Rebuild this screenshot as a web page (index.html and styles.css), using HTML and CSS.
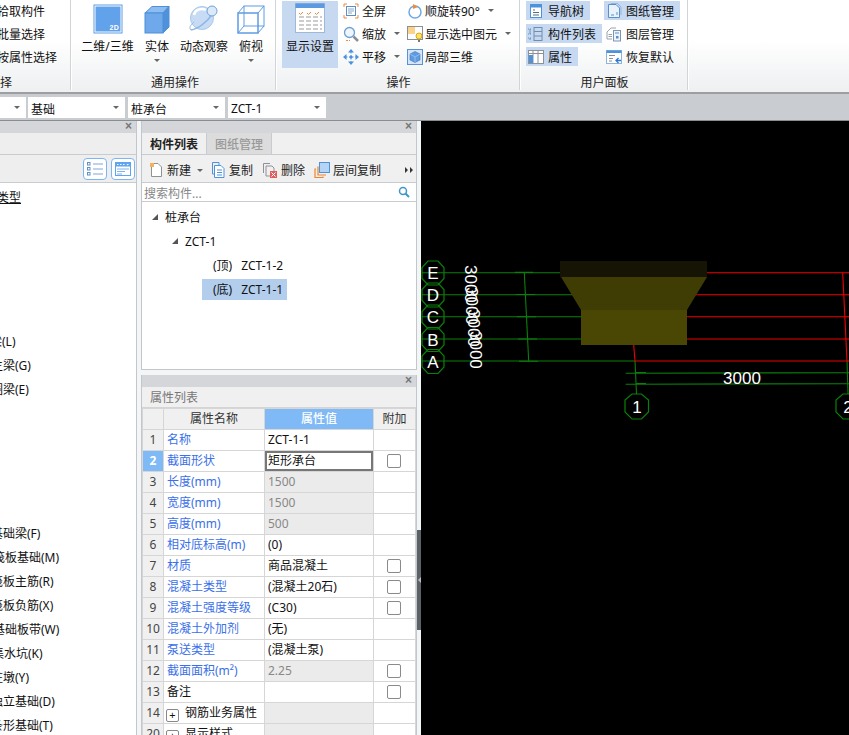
FILE: index.html
```html
<!DOCTYPE html>
<html lang="zh">
<head>
<meta charset="utf-8">
<title>构件列表</title>
<link rel="stylesheet" href="styles.css">
</head>
<body>
<header class="ribbon">
  <section class="group g1">
    <div class="g-body rows clip">
      <div class="row">拾取构件</div>
      <div class="row">批量选择</div>
      <div class="row">按属性选择</div>
    </div>
    <div class="g-label clip-label">选择</div>
  </section>
  <section class="group g2">
    <div class="g-body bigs">
      <div class="big w53">
        <svg class="ic30" viewBox="0 0 30 30"><rect x="1" y="1" width="28" height="28" fill="#fff" stroke="#5c9ce4"/><rect x="2.500" y="2.500" width="25" height="25" fill="#62a2ea"/><text x="26" y="26" class="t2d">2D</text></svg>
        <span class="big-t">二维/三维</span>
      </div>
      <div class="big w24">
        <svg class="ic30" viewBox="0 0 30 30"><path d="M3 9 10 2.500H27L21 9Z" fill="#8dbdf0" stroke="#4f8fd6"/><path d="M21 9 27 2.500V23L21 29Z" fill="#5091dc" stroke="#4f8fd6"/><rect x="3" y="9" width="18" height="20" fill="#6fa9ec" stroke="#4f8fd6"/></svg>
        <span class="big-t">实体</span>
        <i class="tri"></i>
      </div>
      <div class="big w48">
        <svg class="ic30" viewBox="0 0 30 30"><circle cx="13" cy="14" r="11.500" fill="#c7dcf4" stroke="#a9c8ea"/><path d="M5 11a8 7 0 0 1 12-5" fill="none" stroke="#fff" stroke-width="2.500"/><path d="M2 26C8 25 18 19 24 9" fill="none" stroke="#8fb7e6" stroke-width="1.500"/><circle cx="23" cy="7" r="5" fill="#dbe9f8" stroke="#6fa2dc"/><path d="M2 26c-3-3 1-6 3-8" fill="none" stroke="#8fb7e6"/></svg>
        <span class="big-t">动态观察</span>
      </div>
      <div class="big w24">
        <svg class="ic30" viewBox="0 0 30 30"><g fill="none" stroke="#5c9ce4"><rect x="2" y="9" width="20" height="20" stroke-width="1.500"/><rect x="8" y="2" width="20" height="20"/><path d="M2 9 8 2M22 9 28 2M22 29 28 22M2 29 8 22"/></g></svg>
        <span class="big-t">俯视</span>
        <i class="tri"></i>
      </div>
    </div>
    <div class="g-label">通用操作</div>
  </section>
  <section class="group g3">
    <div class="g-body cols3">
      <div class="big disp on">
        <svg class="ic30" viewBox="0 0 30 30"><rect x="0.500" y="0.500" width="29" height="29" fill="#fff" stroke="#9db8d8"/><rect x="0.500" y="0.500" width="29" height="4.500" fill="#5b9ae0"/><g stroke="#f08a30"><path d="M4 10l1.500 1.500L8 9M12 10l1.500 1.500L16 9M20 10l1.500 1.500L24 9" fill="none"/></g><g stroke="#9a9a9a" stroke-dasharray="5 2"><path d="M4 14H27M4 18H27M4 22H27M4 26H27"/></g></svg>
        <span class="disp-t">显示设置</span>
      </div>
      <div class="rows col-a">
        <div class="row"><svg class="ic16" viewBox="0 0 16 16"><path d="M1 4V1H4M12 1H15V4M15 12V15H12M4 15H1V12" fill="none" stroke="#ef8a3a"/><rect x="3.500" y="3.500" width="9" height="9" fill="#fff" stroke="#5b8fc9"/><path d="M5 6H11M5 8H11M5 10H9" stroke="#8aa5c4"/></svg><span>全屏</span></div>
        <div class="row"><svg class="ic16" viewBox="0 0 16 16"><circle cx="6.500" cy="6.500" r="5" fill="#eef5fc" stroke="#6f9fd2" stroke-width="1.300"/><path d="M10.500 10.500 15 15" stroke="#8b8f94" stroke-width="2.500"/><path d="M3 14.500H7" stroke="#ef8a3a" stroke-dasharray="2 1"/></svg><span>缩放</span><i class="tri"></i></div>
        <div class="row"><svg class="ic16" viewBox="0 0 16 16"><g fill="#4c93dc"><path d="M8 0 11 3.500H5ZM8 16 5 12.500H11ZM0 8 3.500 5V11ZM16 8 12.500 11V5Z"/><circle cx="8" cy="8" r="1.500"/></g><path d="M8 3V13M3 8H13" stroke="#4c93dc" stroke-dasharray="1.500 1.500"/></svg><span>平移</span><i class="tri"></i></div>
      </div>
      <div class="rows col-b">
        <div class="row"><svg class="ic16" viewBox="0 0 16 16"><circle cx="8" cy="9" r="6" fill="none" stroke="#6fa8e6" stroke-width="1.500"/><path d="M6 1 11 4 6 6Z" fill="#ef8a3a"/></svg><span>顺旋转90°</span><i class="tri"></i></div>
        <div class="row"><svg class="ic16" viewBox="0 0 16 16"><rect x="0.500" y="0.500" width="15" height="13" fill="#fff" stroke="#8b9097"/><rect x="1" y="1" width="7" height="7" fill="#fbd28a"/><circle cx="12" cy="10" r="3" fill="#fbe45a" stroke="#d9a520"/><path d="M11 14H13V16H11Z" fill="#777"/></svg><span>显示选中图元</span><i class="tri"></i></div>
        <div class="row"><svg class="ic16" viewBox="0 0 16 16"><rect x="0.500" y="0.500" width="15" height="15" fill="#d7e6f7" stroke="#5b93d2"/><path d="M8 2.500 13 5V11L8 13.500 3 11V5Z" fill="#5f9be0" stroke="#3f78bc" stroke-width="0.600"/><path d="M8 8V13M3 5 8 8 13 5" stroke="#a9cbef" stroke-width="0.700" fill="none"/></svg><span>局部三维</span></div>
      </div>
    </div>
    <div class="g-label">操作</div>
  </section>
  <section class="group g4">
    <div class="g-body cols4">
      <div class="rows col-a2">
        <div class="row on"><svg class="ic16" viewBox="0 0 16 16"><rect x="2.500" y="1.500" width="11" height="13" fill="#fff" stroke="#4c93dc"/><rect x="2.500" y="1.500" width="11" height="3" fill="#4c93dc"/><path d="M5 7H7M5 9.500H11M5 12H11" stroke="#5a6a7a"/></svg><span>导航树</span></div>
        <div class="row on"><svg class="ic16" viewBox="0 0 16 16"><g fill="none" stroke="#6f8fb0"><path d="M2 3V8M2 12V14"/><rect x="6" y="1.500" width="8" height="13"/><path d="M6 5.500H14M6 10H14"/></g><path d="M0 3H4M0 8H4M0 12H4" stroke="#4c93dc" stroke-dasharray="1 1"/></svg><span>构件列表</span></div>
        <div class="row on"><svg class="ic16" viewBox="0 0 16 16"><rect x="0.500" y="1.500" width="15" height="13" fill="#fff" stroke="#8d9298"/><path d="M5 2V14M10 2V14M1 4.500H15" stroke="#8d9298"/><rect x="1" y="6" width="4" height="8" fill="#4c93dc"/></svg><span>属性</span></div>
      </div>
      <div class="rows col-b2">
        <div class="row on"><svg class="ic16" viewBox="0 0 16 16"><path d="M2.500 1.500H10L13.500 5V14.500H2.500Z" fill="#e9f2fb" stroke="#5b8fc9"/><path d="M5 1V0.500H11.500L15 4V12" fill="none" stroke="#8fb5dd"/><path d="M5 12H8M11 9V12" stroke="#5b8fc9"/></svg><span>图纸管理</span></div>
        <div class="row"><svg class="ic16" viewBox="0 0 16 16"><rect x="7.500" y="4.500" width="7" height="10.500" fill="#eef4fb" stroke="#7d95b0"/><path d="M9 7H13" stroke="#5b8fc9"/><rect x="10" y="10" width="2.500" height="2.500" fill="#5b8fc9"/><path d="M1 6 5 2H10M1 6V13H6M2.500 8.500H6M2.500 10.500H6" fill="none" stroke="#9aa3ad"/></svg><span>图层管理</span></div>
        <div class="row"><svg class="ic16" viewBox="0 0 16 16"><rect x="0.500" y="1.500" width="15" height="13" fill="#fff" stroke="#8db4dd"/><rect x="0.500" y="1.500" width="15" height="2.500" fill="#4c93dc"/><path d="M3 6.500H9M3 9.500H7M3 12H6" stroke="#8b8f94"/><path d="M15 11.500H10.500M12.500 9 10 11.500 12.500 14" fill="none" stroke="#2f7ad0" stroke-width="1.300"/></svg><span>恢复默认</span></div>
      </div>
    </div>
    <div class="g-label">用户面板</div>
  </section>
  <div class="ribbon-rest"></div>
</header>

<nav class="selects">
  <div class="sel s0"><i class="tri"></i></div>
  <div class="sel s1"><span>基础</span><i class="tri"></i></div>
  <div class="sel s1"><span>桩承台</span><i class="tri"></i></div>
  <div class="sel s1 s3"><span>ZCT-1</span><i class="tri"></i></div>
</nav>

<main class="work">
  <aside class="left">
    <div class="p-head"><span class="x">×</span></div>
    <div class="left-tabs"></div>
    <div class="left-tools">
      <span class="ibtn"><svg width="18" height="16" viewBox="0 0 18 16"><g fill="none" stroke="#5f90c6"><rect x="1.500" y="1.500" width="2.500" height="2.500"/><rect x="1.500" y="6.500" width="2.500" height="2.500"/><rect x="1.500" y="11.500" width="2.500" height="2.500"/><path d="M7 3H17M7 8H17M7 13H17" stroke="#7fa8d6"/></g></svg></span>
      <span class="ibtn"><svg width="16" height="14" viewBox="0 0 16 14"><rect x="0.500" y="0.500" width="15" height="13" fill="#fff" stroke="#5ea4f0"/><rect x="0.500" y="0.500" width="15" height="4" fill="#5ea4f0"/><path d="M2 2.500H3.500M5 2.500H6.500M8 2.500H9.500" stroke="#fff"/><path d="M11.500 2H14L12.700 3.500Z" fill="#fff"/><path d="M2 7H14M2 9.500H10M2 12H7" stroke="#7fb4ee"/></svg></span>
    </div>
    <ul class="l-list">
      <li class="u">基础类型</li>
      <li class="a1">连梁(L)</li>
      <li class="a2">框架主梁(G)</li>
      <li class="a3">圈梁(E)</li>
      <li class="b1">基础梁(F)</li>
      <li class="b2">筏板基础(M)</li>
      <li class="b2r">筏板主筋(R)</li>
      <li class="b2r">筏板负筋(X)</li>
      <li class="b2">基础板带(W)</li>
      <li class="b3">集水坑(K)</li>
      <li class="b4">柱墩(Y)</li>
      <li class="b5">独立基础(D)</li>
      <li class="b5">条形基础(T)</li>
    </ul>
  </aside>

  <div class="mid">
    <section class="list-panel">
      <div class="p-head"><span class="x">×</span></div>
      <div class="tabs"><span class="tab act">构件列表</span><span class="tab">图纸管理</span></div>
      <div class="m-tools">
        <span class="tool"><svg class="ic16" viewBox="0 0 16 16"><path d="M3.500 1.500H10L13.500 5V14.500H3.500Z" fill="#fff" stroke="#8d9298"/><path d="M2 1H6V5H2Z" fill="#f5b25a"/></svg>新建<i class="tri"></i></span>
        <span class="tool"><svg class="ic16" viewBox="0 0 16 16"><path d="M2.500 0.500H9V3" fill="none" stroke="#4c93dc"/><path d="M2.500 .5V12H4" fill="none" stroke="#4c93dc"/><path d="M4.500 3.500H11L14 6.500V15.500H4.500Z" fill="#fff" stroke="#4c93dc"/><path d="M7 8H12M7 10.500H12M7 13H12" stroke="#4c93dc"/></svg>复制</span>
        <span class="tool"><svg class="ic16" viewBox="0 0 16 16"><path d="M1.500 11V1.500H8" fill="none" stroke="#8d9298"/><path d="M4 4H10L12 6V9M4 4V14H8" fill="none" stroke="#8d9298"/><rect x="8" y="9" width="7" height="7" fill="#e25d5d"/><path d="M9.500 10.500 13.500 14.500M13.500 10.500 9.500 14.500" stroke="#fff"/></svg>删除</span>
        <span class="tool"><svg class="ic16" viewBox="0 0 16 16"><path d="M2 7H1V15.500H9V14.500M4 4.500V13H12" fill="none" stroke="#f0832a" stroke-width="1.200"/><rect x="5.500" y="0.500" width="10" height="10" fill="#b5d3f5" stroke="#4c93dc"/></svg>层间复制</span>
        <svg class="more" width="8" height="6" viewBox="0 0 8 6"><path d="M0 0 3 3 0 6ZM5 0 8 3 5 6Z" fill="#333"/></svg>
      </div>
      <div class="search"><span>搜索构件...</span><svg width="12" height="12" viewBox="0 0 12 12"><circle cx="5" cy="5" r="3.500" fill="none" stroke="#3f97c9" stroke-width="1.500"/><path d="M7.500 7.500 11 11" stroke="#3f97c9" stroke-width="2"/></svg></div>
      <ul class="tree">
        <li class="t1"><i class="arr"></i>桩承台</li>
        <li class="t2"><i class="arr"></i>ZCT-1</li>
        <li class="t3"><span class="leaf">(顶)<b>ZCT-1-2</b></span></li>
        <li class="t3"><span class="leaf sel-leaf">(底)<b>ZCT-1-1</b></span></li>
      </ul>
    </section>
    <section class="prop-panel">
      <div class="p-head"><span class="x">×</span></div>
      <div class="p-title">属性列表</div>
      <table class="props">
        <colgroup><col class="c0"><col class="c1"><col class="c2"><col class="c3"></colgroup>
        <thead><tr><th></th><th>属性名称</th><th class="hv">属性值</th><th>附加</th></tr></thead>
        <tbody>
          <tr><th>1</th><td class="nm">名称</td><td>ZCT-1-1</td><td></td></tr>
          <tr><th class="hv">2</th><td class="nm">截面形状</td><td class="cur">矩形承台</td><td class="ck"><i></i></td></tr>
          <tr><th>3</th><td class="nm">长度(mm)</td><td class="dis">1500</td><td></td></tr>
          <tr><th>4</th><td class="nm">宽度(mm)</td><td class="dis">1500</td><td></td></tr>
          <tr><th>5</th><td class="nm">高度(mm)</td><td class="dis">500</td><td></td></tr>
          <tr><th>6</th><td class="nm">相对底标高(m)</td><td>(0)</td><td></td></tr>
          <tr><th>7</th><td class="nm">材质</td><td>商品混凝土</td><td class="ck"><i></i></td></tr>
          <tr><th>8</th><td class="nm">混凝土类型</td><td>(混凝土20石)</td><td class="ck"><i></i></td></tr>
          <tr><th>9</th><td class="nm">混凝土强度等级</td><td>(C30)</td><td class="ck"><i></i></td></tr>
          <tr><th>10</th><td class="nm">混凝土外加剂</td><td>(无)</td><td></td></tr>
          <tr><th>11</th><td class="nm">泵送类型</td><td>(混凝土泵)</td><td></td></tr>
          <tr><th>12</th><td class="nm">截面面积(m²)</td><td class="dis">2.25</td><td class="ck"><i></i></td></tr>
          <tr><th>13</th><td>备注</td><td></td><td class="ck"><i></i></td></tr>
          <tr><th>14</th><td><span class="plus">+</span>钢筋业务属性</td><td class="dis"></td><td></td></tr>
          <tr><th>20</th><td><span class="plus">+</span>显示样式</td><td class="dis"></td><td></td></tr>
        </tbody>
      </table>
    </section>
  </div>

  <div class="split"><div class="handle"><i></i></div></div>

  <div class="canvas">
    <svg class="cad" viewBox="421 121 428 614" width="428" height="614">
      <g class="gl">
        <path d="M422 272.700H572M422 294.700H590M422 316.700H590M422 339H590M422 361H635"/>
        <path d="M524.300 272.700 528.700 361"/>
        <path d="M515 272.400H533M516 294.500H535M517 316.700H536M518 339H537M519 361.200H538" stroke-width="1.600"/>
        <path d="M635 361 636.500 394M847 361 848 394"/>
        <path d="M625.700 373.200 849 372.700M625.700 384.200 849 383.700"/>
        <path d="M636 372.500H646M636 383.500H646" stroke-width="1.600"/>
      </g>
      <g class="rd">
        <path d="M700 272.700H849M690 294.700H849M680 316.700H849M680 339H849M635 361H849"/>
        <path d="M633.300 340 635 361M842.700 272.700 847 361"/>
      </g>
      <path class="bx1" d="M560 261H707V277H560Z"/>
      <path class="bx2" d="M561 277H707L687 310H581Z"/>
      <path class="bx3" d="M581 310H687V345H581Z"/>
      <g class="oct">
        <path d="M428 261h10l6 6.500v11l-6 6.500h-10l-6-6.500v-11Z"/>
        <path d="M428 283h10l6 6.500v11l-6 6.500h-10l-6-6.500v-11Z"/>
        <path d="M428 305h10l6 6.500v11l-6 6.500h-10l-6-6.500v-11Z"/>
        <path d="M428 327.500h10l6 6.500v11l-6 6.500h-10l-6-6.500v-11Z"/>
        <path d="M428 349.500h10l6 6.500v11l-6 6.500h-10l-6-6.500v-11Z"/>
        <path d="M632 394h9.500l7 6v12l-7 7h-9.500l-7-7v-12Z"/>
        <path d="M843 394h9.500l7 6v12l-7 7h-9.500l-7-7v-12Z"/>
      </g>
      <g class="ct">
        <text x="433" y="279">E</text>
        <text x="433" y="301">D</text>
        <text x="433" y="323">C</text>
        <text x="433" y="345.500">B</text>
        <text x="433" y="367.500">A</text>
        <text x="637" y="412.500">1</text>
        <text x="848" y="412.500">2</text>
        <text x="742" y="384">3000</text>
        <text transform="translate(464.500 265) rotate(90)">3000</text>
        <text transform="translate(466 287) rotate(90)">3000</text>
        <text transform="translate(468 309) rotate(90)">3000</text>
        <text transform="translate(469.500 331) rotate(90)">3000</text>
      </g>
    </svg>
  </div>
</main>
</body>
</html>
```

FILE: styles.css
```css
* { box-sizing: border-box; }
html, body { margin: 0; padding: 0; height: 735px; overflow: hidden; }
body {
  font-family: "Noto Sans", "Noto Sans CJK SC", "Liberation Sans", sans-serif;
  font-size: 12px;
  color: #111;
  background: #fff;
}
ul { list-style: none; margin: 0; padding: 0; }
i { display: block; font-style: normal; }

.tri {
  width: 0; height: 0;
  border-left: 3px solid transparent;
  border-right: 3px solid transparent;
  border-top: 3px solid #666;
  flex: none;
}

/* ribbon */
.ribbon {
  height: 94px;
  display: flex;
  background: linear-gradient(#fff 0, #fff 40px, #eef0f1 90px);
  border-bottom: 2px solid #9c9e9f;
}
.group {
  height: 90px;
  border-right: 1px solid #d2d5d8;
  box-shadow: 1px 0 0 #fff;
  display: flex;
  flex-direction: column;
  flex: none;
}
.g-body { height: 72px; flex: none; }
.g-label { height: 18px; line-height: 22px; text-align: center; color: #222; white-space: nowrap; }
.g1 { width: 71px; overflow: hidden; }
.g2 { width: 205px; }
.g2 .g-label { padding-left: 4px; }
.g3 { width: 244px; }
.g3 .g-label { padding-left: 2px; }
.g4 { width: 168px; }
.g4 .g-label { padding-left: 2px; }
.ribbon-rest { flex: 1; }
.g1 .clip-label { width: 24px; margin-left: -12px; text-align: left; }
.clip { margin-left: -3px; }

.rows { display: flex; flex-direction: column; align-items: flex-start; }
.row {
  height: 19px;
  margin: 1px 0 3px;
  display: flex;
  align-items: center;
  white-space: nowrap;
  line-height: 19px;
}
.g1 .row { padding-top: 2px; }
.row span { padding-top: 2px; }
.row svg { margin-right: 3px; flex: none; }
.row .tri { margin-left: 8px; }
.row.on { background: #c7d9f1; padding-right: 6px; }

.ic16 { width: 16px; height: 16px; display: block; flex: none; }
.ic30 { width: 30px; height: 30px; display: block; flex: none; }

.bigs { display: flex; gap: 11px; padding: 4px 0 0 10px; }
.big { display: flex; flex-direction: column; align-items: center; flex: none; }
.w53 { width: 53px; }
.w48 { width: 48px; }
.w24 { width: 24px; }
.big-t { margin-top: 4px; line-height: 18px; white-space: nowrap; }
.big .tri { margin-top: 3px; }
.t2d { font: bold 7px "Liberation Sans", sans-serif; fill: #fff; text-anchor: end; letter-spacing: .3px; }

.cols3 { display: flex; padding-left: 6px; }
.disp { width: 56px; height: 67px; margin-top: 1px; background: #c7d9f1; padding-top: 2px; }
.disp-t { margin-top: 5px; line-height: 18px; white-space: nowrap; }
.col-a { margin-left: 5px; width: 64px; }
.col-b { width: 110px; }
.col-b .row svg { margin-right: 2px; }

.cols4 { display: flex; padding-left: 6px; }
.col-a2 { width: 78px; }
.col-a2 .row svg { margin-right: 4px; margin-left: 2px; }
.col-b2 .row svg { margin-right: 4px; margin-left: 2px; }

/* selects row */
.selects {
  height: 26px;
  background: #c9ccd0;
  display: flex;
  gap: 3px;
  padding-top: 3px;
  align-items: flex-start;
}
.sel {
  height: 21px;
  background: #fff;
  display: flex;
  align-items: center;
  justify-content: space-between;
  padding: 0 6px 0 3px;
  flex: none;
}
.sel span { padding-top: 2px; }
.s0 { width: 26px; margin-right: -1px; justify-content: flex-end; }
.s1 { width: 97px; }
.s3 { width: 98px; }

/* work area */
.work {
  height: 615px;
  display: flex;
  border-top: 1px solid #8a8d90;
  overflow: hidden;
}
.p-head {
  height: 12px;
  background: #d4d6da;
  position: relative;
  flex: none;
}
.x {
  position: absolute;
  right: 4px;
  top: -3px;
  font: bold 12px/16px "Liberation Sans", sans-serif;
  color: #777;
}

.left {
  width: 137px;
  flex: none;
  border-right: 1px solid #c3c7cc;
  display: flex;
  flex-direction: column;
}
.left-tabs { height: 22px; background: #eee; border-bottom: 1px solid #c8ccd0; flex: none; }
.left-tools {
  height: 28px;
  background: #eee;
  border-bottom: 1px solid #c8ccd0;
  display: flex;
  justify-content: flex-end;
  gap: 4px;
  padding: 3px 1px 0 0;
  flex: none;
}
.ibtn {
  width: 24px;
  height: 22px;
  background: #fff;
  border: 1px solid #7db5f2;
  border-radius: 4px;
  display: flex;
  align-items: center;
  justify-content: center;
}
.l-list { overflow: hidden; padding-top: 2px; }
.l-list li { height: 24px; line-height: 26px; white-space: nowrap; }
.l-list .u { text-decoration: underline; margin-left: -27px; margin-bottom: 120px; }
.l-list .a1 { margin-left: -22px; }
.l-list .a2 { margin-left: -33px; }
.l-list .a3 { margin-left: -9px; }
.l-list .b1 { margin-left: -9px; margin-top: 120px; }
.l-list .b2 { margin-left: -7px; }
.l-list .b2r { margin-left: -9px; }
.l-list .b3 { margin-left: -8px; }
.l-list .b4 { margin-left: -9px; }
.l-list .b5 { margin-left: -9px; }

.mid { width: 280px; flex: none; padding-left: 4px; background: #f4f5f6; display: flex; flex-direction: column; gap: 5px; }
.list-panel {
  height: 249px;
  width: 276px;
  flex: none;
  border: 1px solid #c3c7cc;
  border-top: 0;
  background: #fff;
  display: flex;
  flex-direction: column;
}
.tabs { height: 22px; display: flex; background: #f0f0f0; border-bottom: 1px solid #c8ccd0; flex: none; }
.tab {
  width: 65px;
  text-align: center;
  line-height: 24px;
  color: #999;
  background: #dcdcdc;
  border-right: 1px solid #c8ccd0;
  font-weight: 500;
}
.tab.act { color: #222; background: #f0f0f0; font-weight: 700; }
.m-tools {
  height: 28px;
  background: #f0f0f0;
  border-bottom: 1px solid #c8ccd0;
  display: flex;
  align-items: center;
  padding: 3px 0 0 6px;
  flex: none;
  color: #222;
}
.tool { display: flex; align-items: center; gap: 3px; margin-right: 9px; white-space: nowrap; }
.tool .tri { margin-left: 3px; margin-right: -2px; }
.more { margin-left: 15px; flex: none; }
.search {
  height: 19px;
  border-bottom: 1px solid #c8ccd0;
  display: flex;
  align-items: center;
  justify-content: space-between;
  padding: 0 6px 0 2px;
  color: #888;
  flex: none;
}
.search span { padding-top: 2px; }
.tree { padding-top: 2px; }
.tree li { height: 24px; padding-top: 2px; display: flex; align-items: center; white-space: nowrap; }
.t1 { padding-left: 10px; }
.t2 { padding-left: 30px; }
.t3 { padding-left: 60px; }
.arr {
  width: 0; height: 0;
  border-left: 6px solid transparent;
  border-bottom: 6px solid #555;
  margin-right: 7px;
}
.leaf { height: 21px; line-height: 21px; padding: 0 4px 0 11px; }
.leaf b { font-weight: 400; margin-left: 9px; }
.sel-leaf { background: #b3cdec; }

.prop-panel { width: 276px; flex: 1; min-height: 0; overflow: hidden; border-left: 1px solid #c3c7cc; border-right: 1px solid #c3c7cc; background: #fff; }
.p-title { height: 21px; line-height: 21px; padding-left: 8px; background: #f0f0f0; color: #777; border-bottom: 1px solid #d4d4d4; }
.props { width: 273px; border-collapse: collapse; table-layout: fixed; }
.c0 { width: 21px; }
.c1 { width: 101px; }
.c2 { width: 109px; }
.c3 { width: 42px; }
.props th, .props td {
  height: 21px;
  padding: 0;
  border: 1px solid #d6d6d6;
  font-weight: 400;
  white-space: nowrap;
  line-height: 18px;
}
.props thead th { background: #f0f0f0; text-align: center; color: #333; }
.props tbody th { background: #f0f0f0; color: #444; text-align: center; font-size: 12px; }
.props td { padding-left: 3px; }
.props .hv { background: #7fb9f6; color: #fff; font-weight: 700; }
.props thead .hv { font-weight: 500; }
.nm { color: #3a70e8; }
.dis { background: #ebebeb; color: #888; }
.props .cur { box-shadow: inset 0 0 0 2px #777; }
.ck i { width: 14px; height: 14px; margin-left: 10px; border: 1px solid #8a8a8a; border-radius: 2px; background: #fff; }
.plus {
  display: inline-block;
  width: 13px; height: 13px;
  border: 1px solid #888;
  border-radius: 2px;
  line-height: 10px;
  text-align: center;
  margin: 0 6px 0 -1px;
  vertical-align: -2px;
  font-size: 11px;
}

.split { width: 4px; flex: none; background: #f4f5f6; padding-top: 409px; }
.handle { height: 100px; background: #5c6167; display: flex; align-items: center; justify-content: center; }
.handle i { border-top: 3px solid transparent; border-bottom: 3px solid transparent; border-right: 3px solid #bbb; }

.canvas { flex: 1; background: #000; min-width: 0; overflow: hidden; }
.cad { display: block; }
.gl path { fill: none; stroke: #0a800a; stroke-width: 1.100; }
.rd path { fill: none; stroke: #f00000; stroke-width: 1.100; }
.bx1 { fill: #161404; }
.bx2 { fill: #3f3c04; }
.bx3 { fill: #4a4705; }
.oct path { fill: none; stroke: #0a800a; stroke-width: 1.200; }
.ct text { fill: #fff; font: 17px "Liberation Sans", sans-serif; text-anchor: middle; }
.ct text[transform] { text-anchor: start; }
```
